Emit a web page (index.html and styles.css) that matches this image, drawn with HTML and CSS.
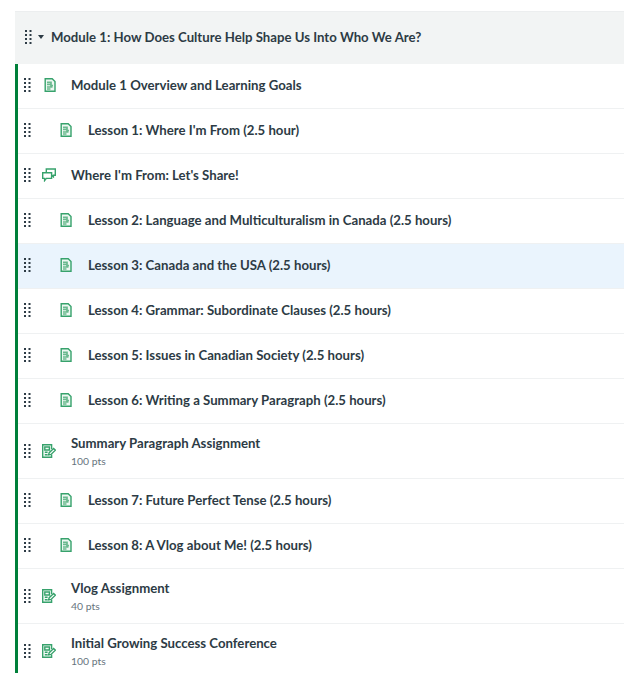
FILE: index.html
```html
<!DOCTYPE html>
<html lang="en">
<head>
<meta charset="utf-8">
<title>Module 1</title>
<link rel="stylesheet" href="styles.css">
</head>
<body>
<svg class="defs" width="0" height="0" aria-hidden="true">
  <defs>
    <g id="grip" fill="#2d3b45">
      <rect x="0" y="0" width="2" height="2"/><rect x="4.5" y="0" width="2" height="2"/>
      <rect x="0" y="4" width="2" height="2"/><rect x="4.5" y="4" width="2" height="2"/>
      <rect x="0" y="8" width="2" height="2"/><rect x="4.5" y="8" width="2" height="2"/>
      <rect x="0" y="12" width="2" height="2"/><rect x="4.5" y="12" width="2" height="2"/>
    </g>
    <g id="page" fill="none" stroke="#37a26c" stroke-width="1.4">
      <path d="M1.2.7H8.2L11 3.5V13.3H1.2Z" fill="#eef8f2"/>
      <path d="M3 4.3H7V7.5H9M3 6.5H6.5M3 9H8.5M3 11H6.5" stroke-width="1.7" stroke="#6bb98f"/>
    </g>
    <g id="talk" fill="none" stroke="#37a26c" stroke-width="1.4">
      <path d="M.7 4.7H9.6V10.4H4.4L2.6 12.6V10.4H.7Z"/>
      <path d="M4.3 4.5V1H13.3V7.2H11.4V8.8L9.6 7.4"/>
    </g>
    <g id="edit" fill="none" stroke="#37a26c" stroke-width="1.4">
      <path d="M9.6 5V.7H.7V13.3H9.6V10.6" fill="#f4fbf7"/>
      <path d="M2.8 3H7.4V6H2.8ZM2.8 8.3H5.6M2.8 10.7H5.6"/>
      <path d="M6.6 10.9L7.2 8.7L11.6 4.4L13.4 6.2L9 10.4Z" fill="#fff"/>
    </g>
  </defs>
</svg>
<main class="module">
  <header class="module-head">
    <svg class="grip" width="7" height="14"><use href="#grip"/></svg>
    <span class="caret"></span>
    <h2 class="module-title">Module 1: How Does Culture Help Shape Us Into Who We Are?</h2>
  </header>
  <ul class="items">
    <li class="item">
      <svg class="grip" width="7" height="14"><use href="#grip"/></svg>
      <svg class="icon" width="14" height="14"><use href="#page"/></svg>
      <div class="text"><a class="name">Module 1 Overview and Learning Goals</a></div>
    </li>
    <li class="item indent">
      <svg class="grip" width="7" height="14"><use href="#grip"/></svg>
      <svg class="icon" width="14" height="14"><use href="#page"/></svg>
      <div class="text"><a class="name">Lesson 1: Where I'm From (2.5 hour)</a></div>
    </li>
    <li class="item wide">
      <svg class="grip" width="7" height="14"><use href="#grip"/></svg>
      <svg class="icon" width="14" height="14"><use href="#talk"/></svg>
      <div class="text"><a class="name">Where I'm From: Let's Share!</a></div>
    </li>
    <li class="item indent">
      <svg class="grip" width="7" height="14"><use href="#grip"/></svg>
      <svg class="icon" width="14" height="14"><use href="#page"/></svg>
      <div class="text"><a class="name">Lesson 2: Language and Multiculturalism in Canada (2.5 hours)</a></div>
    </li>
    <li class="item indent active">
      <svg class="grip" width="7" height="14"><use href="#grip"/></svg>
      <svg class="icon" width="14" height="14"><use href="#page"/></svg>
      <div class="text"><a class="name">Lesson 3: Canada and the USA (2.5 hours)</a></div>
    </li>
    <li class="item indent">
      <svg class="grip" width="7" height="14"><use href="#grip"/></svg>
      <svg class="icon" width="14" height="14"><use href="#page"/></svg>
      <div class="text"><a class="name">Lesson 4: Grammar: Subordinate Clauses (2.5 hours)</a></div>
    </li>
    <li class="item indent">
      <svg class="grip" width="7" height="14"><use href="#grip"/></svg>
      <svg class="icon" width="14" height="14"><use href="#page"/></svg>
      <div class="text"><a class="name">Lesson 5: Issues in Canadian Society (2.5 hours)</a></div>
    </li>
    <li class="item indent">
      <svg class="grip" width="7" height="14"><use href="#grip"/></svg>
      <svg class="icon" width="14" height="14"><use href="#page"/></svg>
      <div class="text"><a class="name">Lesson 6: Writing a Summary Paragraph (2.5 hours)</a></div>
    </li>
    <li class="item tall wide">
      <svg class="grip" width="7" height="14"><use href="#grip"/></svg>
      <svg class="icon" width="14" height="14"><use href="#edit"/></svg>
      <div class="text"><a class="name">Summary Paragraph Assignment</a><span class="pts">100 pts</span></div>
    </li>
    <li class="item indent">
      <svg class="grip" width="7" height="14"><use href="#grip"/></svg>
      <svg class="icon" width="14" height="14"><use href="#page"/></svg>
      <div class="text"><a class="name">Lesson 7: Future Perfect Tense (2.5 hours)</a></div>
    </li>
    <li class="item indent">
      <svg class="grip" width="7" height="14"><use href="#grip"/></svg>
      <svg class="icon" width="14" height="14"><use href="#page"/></svg>
      <div class="text"><a class="name">Lesson 8: A Vlog about Me! (2.5 hours)</a></div>
    </li>
    <li class="item tall wide">
      <svg class="grip" width="7" height="14"><use href="#grip"/></svg>
      <svg class="icon" width="14" height="14"><use href="#edit"/></svg>
      <div class="text"><a class="name">Vlog Assignment</a><span class="pts">40 pts</span></div>
    </li>
    <li class="item tall wide">
      <svg class="grip" width="7" height="14"><use href="#grip"/></svg>
      <svg class="icon" width="14" height="14"><use href="#edit"/></svg>
      <div class="text"><a class="name">Initial Growing Success Conference</a><span class="pts">100 pts</span></div>
    </li>
  </ul>
</main>
</body>
</html>
```
FILE: styles.css
```css
* { box-sizing: border-box; }
html, body { height: 100%; }
body {
  margin: 0;
  padding: 11px 0 0 15px;
  overflow: hidden;
  background: #fff;
  font-family: Lato, "Liberation Sans", sans-serif;
  color: #2d3b45;
}
.defs { display: block; height: 0; }
.module-head {
  display: flex;
  align-items: center;
  height: 53px;
  padding: 0 0 2px 10px;
  background: #f2f4f4;
  border-top: 1px solid #eceeef;
}
.grip { flex: none; display: block; }
.caret {
  flex: none;
  width: 0;
  height: 0;
  margin-left: 6px;
  border-left: 3px solid transparent;
  border-right: 3px solid transparent;
  border-top: 4px solid #2d3b45;
}
.module-title {
  margin: 0 0 0 7px;
  font-size: 13.2px;
  font-weight: 700;
  white-space: nowrap;
}
.items {
  list-style: none;
  margin: 0;
  padding: 0;
  border-left: 3px solid #00803a;
}
.item {
  display: flex;
  align-items: center;
  height: 45px;
  padding: 0 0 2px 6px;
  border-bottom: 1px solid #eff1f2;
}
.item.tall { height: 55px; padding-bottom: 0; }
.item.active { background: #eaf4fd; }
.item .icon { flex: none; margin-left: 13px; }
.item .text { margin-left: 13px; }
.item.wide .icon { margin-left: 11px; }
.item.wide .text { margin-left: 15px; }
.item.indent .icon { margin-left: 29px; }
.item.indent .text { margin-left: 14px; }
.name {
  display: block;
  font-size: 13.2px;
  font-weight: 700;
  line-height: 18px;
}
.pts {
  display: block;
  margin-top: 2px;
  font-size: 10.4px;
  line-height: 14px;
  color: #66747d;
}
```
